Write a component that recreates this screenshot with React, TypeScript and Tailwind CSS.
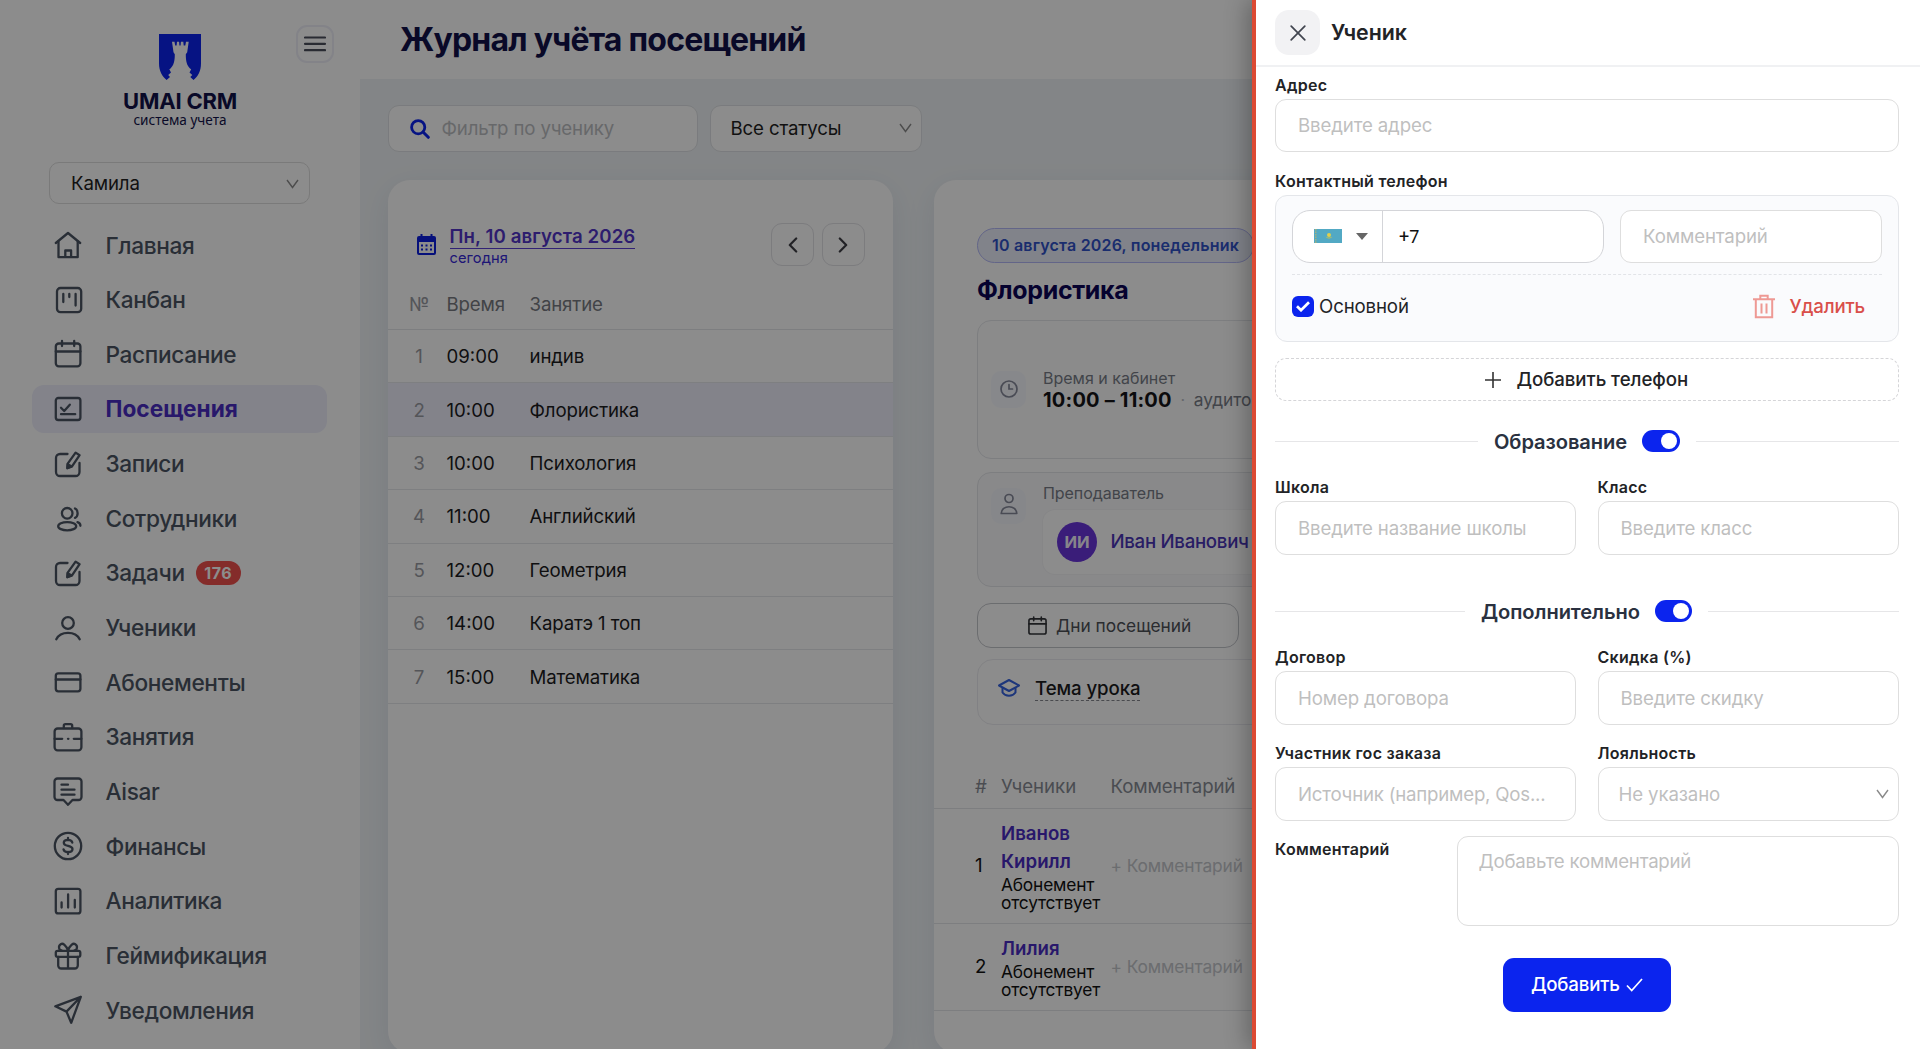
import React, { ReactNode } from 'react';

const TXT = 'text-[18.67px] tracking-[-0.14px]';

function MenuIcon({ children }: { children: ReactNode }) {
  return (
    <svg
      viewBox="0 0 28 28"
      className="h-7 w-7 shrink-0 overflow-visible text-[#4b5563]"
      fill="none"
      stroke="currentColor"
      strokeWidth="2.3"
      strokeLinecap="round"
      strokeLinejoin="round"
    >
      {children}
    </svg>
  );
}

const editIcon = (
  <>
    <path d="M13.5 4H6a4 4 0 0 0-4 4v14a4 4 0 0 0 4 4h15.500a4 4 0 0 0 4-4V13" />
    <path d="M21.600 2.600 25.600 5.200 18.200 16.200 13.300 18.200 13.700 13.700Z" />
    <path d="M13.500 18 13.700 14.200 17.600 16.600Z" fill="currentColor" />
  </>
);

const menu: { label: string; icon: ReactNode; active?: boolean; badge?: string }[] = [
  {
    label: 'Главная',
    icon: (
      <>
        <path d="M1.800 12 14 2 26.200 12" />
        <path d="M4.500 10.500V26.200h19.200V10.500M11.300 26v-6.500h5.800V26" />
      </>
    ),
  },
  {
    label: 'Канбан',
    icon: (
      <>
        <rect x="3" y="2" width="24.200" height="24.200" rx="3.500" />
        <path d="M9.300 8v8M15.300 8v3M21.600 8v11.500" />
      </>
    ),
  },
  {
    label: 'Расписание',
    icon: (
      <>
        <rect x="1.800" y="3.500" width="24.600" height="22.800" rx="3" />
        <path d="M1.800 11.500h24.600M8 1v5M20.200 1v5" />
      </>
    ),
  },
  {
    label: 'Посещения',
    active: true,
    icon: (
      <>
        <rect x="1.800" y="3" width="24.600" height="22" rx="2.500" />
        <path d="m7 12.800 3.200 3.200 5.600-6.300M7 19.200h14.200" />
      </>
    ),
  },
  { label: 'Записи', icon: editIcon },
  {
    label: 'Сотрудники',
    icon: (
      <>
        <circle cx="13.200" cy="9.300" r="5.300" />
        <ellipse cx="13.200" cy="22.200" rx="9" ry="4.100" />
        <path d="M21 4.500c3.500 1.500 3.500 8 0 9.300M23.500 18.200c1.800.6 2.900 1.800 2.900 3.600" />
      </>
    ),
  },
  { label: 'Задачи', badge: '176', icon: editIcon },
  {
    label: 'Ученики',
    icon: (
      <>
        <circle cx="14" cy="9" r="5.800" />
        <path d="M2.300 25.200C6.500 16.700 21.500 16.700 25.700 25.200" />
      </>
    ),
  },
  {
    label: 'Абонементы',
    icon: (
      <>
        <rect x="1.800" y="5.300" width="24.600" height="18" rx="2.500" />
        <path d="M1.800 11.500h24.600" />
      </>
    ),
  },
  {
    label: 'Занятия',
    icon: (
      <>
        <rect x=".6" y="5.500" width="26.800" height="21.800" rx="3" />
        <path d="M9.800 5V2.800c0-1 .6-1.600 1.600-1.600h5.200c1 0 1.600.6 1.600 1.600V5M.6 15.800h7.600M19.800 15.800h7.600" />
        <path d="M14 15.800h.4" />
      </>
    ),
  },
  {
    label: 'Aisar',
    icon: (
      <>
        <path d="M3.500.5h21a3 3 0 0 1 3 3v15.500a3 3 0 0 1-3 3h-6L14 26.800 9.500 22h-6a3 3 0 0 1-3-3V3.500a3 3 0 0 1 3-3Z" />
        <path d="M7.500 6.700h6.500M7.500 11.700h13M7.500 16.700h13" />
      </>
    ),
  },
  {
    label: 'Финансы',
    icon: (
      <>
        <circle cx="14" cy="14" r="13.200" />
        <path d="M18.300 10.500c-.4-1.900-2-2.700-4.300-2.700-2.500 0-4.200 1.100-4.200 3 0 4.400 8.700 2 8.700 6.300 0 2-1.800 3.100-4.500 3.100-2.500 0-4.100-.9-4.500-2.900M14 6v2M14 20v2" />
      </>
    ),
  },
  {
    label: 'Аналитика',
    icon: (
      <>
        <rect x="1.800" y="1.800" width="24.600" height="24.600" rx="2.500" />
        <path d="M7.600 15.500v5M14.100 7.500v13M20.800 13v7.500" />
      </>
    ),
  },
  {
    label: 'Геймификация',
    icon: (
      <>
        <rect x="1.800" y="8.800" width="24.500" height="6" rx="1.800" />
        <path d="M4.200 15v8.500a3 3 0 0 0 3 3h13.600a3 3 0 0 0 3-3V15M14 9v17" />
        <path d="M14 8.500C12 3 9 .8 6.700 2.200 4 3.900 4.800 8 7.500 8.500M14 8.500C16 3 19 .8 21.300 2.200 24 3.900 23.200 8 20.500 8.500" />
      </>
    ),
  },
  {
    label: 'Уведомления',
    icon: <path d="M26.800.8 1.300 10.300l11.200 5.300 4.700 11.200ZM12.500 15.600 26.800.8" />,
  },
];

function Down({ className = '' }: { className?: string }) {
  return (
    <svg viewBox="0 0 13 10" className={`mb-[1px] h-[10px] w-[13px] shrink-0 ${className}`} fill="none" stroke="currentColor" strokeWidth="1.400">
      <path d="M1 1l5.500 7.500L12 1" />
    </svg>
  );
}

function CalendarOutline({ className = '' }: { className?: string }) {
  return (
    <svg viewBox="0 0 20 20" className={className} fill="none" stroke="currentColor" strokeWidth="1.700" strokeLinecap="round" strokeLinejoin="round">
      <rect x="1" y="3" width="18" height="16" rx="2" />
      <path d="M1 8.300h18M6 1v4M14 1v4" />
    </svg>
  );
}

function Sidebar() {
  return (
    <aside className="flex h-full w-[360px] shrink-0 flex-col bg-white">
      <div className="relative flex h-[162px] flex-col items-center pt-[34px]">
        <svg viewBox="0 0 42 46" className="h-[46px] w-[42px]" fill="#0b24ee">
          <path d="M0 0H42V29.500C42 37 39 42.500 34.500 46L31.300 43 33.300 41 30.500 38.500 32.200 35.200 31 34.500C28 31.500 26.800 28 26.800 20.300L28.200 18.300 29.700 7.700H27L26.300 11.500H24.700L24.300 7.700H21.900L21.600 11.500H20.400L20.100 7.700H18L17.600 11.500H16.200L15.500 7.700H13L14.500 18.300 15.800 20.300C15.800 28 14.500 31.500 11.500 34.500L10.300 35.200 12 38.500 9.200 41 11 43 7.600 46C3.200 42.500 0 37 0 29.500Z" />
        </svg>
        <div className="mt-[9px] text-[22px] leading-[24px] font-bold tracking-[-0.2px] whitespace-nowrap text-[#12124a]">UMAI CRM</div>
        <div className="text-[13.600px] leading-[13px] whitespace-nowrap text-[#12124a] font-['Noto_Sans',sans-serif]">система учета</div>
        <div className="absolute top-[25px] left-[296px] flex h-[38px] w-[38px] items-center justify-center rounded-[11px] border-2 border-[#eeeff8]">
          <svg viewBox="0 0 22 16" className="h-4 w-[22px]" stroke="#4b4f5c" strokeWidth="2.200" strokeLinecap="round">
            <path d="M1 1.500h20M1 7.800h20M1 14.100h20" />
          </svg>
        </div>
      </div>
      <div className={`ml-[49px] flex h-[42px] w-[261px] shrink-0 items-center justify-between rounded-[10px] border border-[#dedede] pt-[2px] pr-[10px] pl-[21px] text-[#1f1f1f] ${TXT}`}>
        Камила
        <Down className="text-[#8c8c8c]" />
      </div>
      <nav className="mt-[17px] flex flex-col gap-[6.670px] pl-8">
        {menu.map((m) => (
          <div key={m.label} className={`flex h-12 w-[295px] shrink-0 items-center rounded-xl pl-[22px] ${m.active ? 'bg-[#eeeffc]' : ''}`}>
            <MenuIcon>{m.icon}</MenuIcon>
            <span className={`ml-[23.500px] pt-[1px] text-[22.670px] whitespace-nowrap ${m.active ? 'font-bold tracking-[0px] text-[#4a2cc4]' : 'font-medium tracking-[-0.350px] text-[#4b5563]'}`}>
              {m.label}
            </span>
            {m.badge && (
              <span className="ml-[11px] flex h-6 w-[45px] items-center justify-center rounded-full bg-[#f0504e] text-[16px] font-bold tracking-[0.500px] text-white">
                {m.badge}
              </span>
            )}
          </div>
        ))}
      </nav>
    </aside>
  );
}

const lessons = [
  ['09:00', 'индив'],
  ['10:00', 'Флористика'],
  ['10:00', 'Психология'],
  ['11:00', 'Английский'],
  ['12:00', 'Геометрия'],
  ['14:00', 'Каратэ 1 топ'],
  ['15:00', 'Математика'],
];

function ArrowButton({ d }: { d: string }) {
  return (
    <div className="flex h-[42.600px] w-[42.600px] items-center justify-center rounded-[11px] border border-[#e2e2e6]">
      <svg viewBox="0 0 10 16" className="h-4 w-[10px]" fill="none" stroke="#3f3f46" strokeWidth="2.200" strokeLinecap="round" strokeLinejoin="round">
        <path d={d} />
      </svg>
    </div>
  );
}

function DayCard() {
  return (
    <section className="h-[873px] w-[505px] shrink-0 rounded-[22px] bg-white pt-[43px] shadow-[0_8px_30px_rgba(30,41,90,0.08)]">
      <div className="flex h-[43px] items-center pr-[28px] pl-[29px]">
        <svg viewBox="0 0 19 21" className="h-[21px] w-[19px]">
          <path fill="#0b1ee0" fillRule="evenodd" d="M3.500 0h2v2h8V0h2v2H17a2 2 0 0 1 2 2v15a2 2 0 0 1-2 2H2a2 2 0 0 1-2-2V4a2 2 0 0 1 2-2h1.500ZM2 8v11h15V8Z" />
          <path stroke="#0b1ee0" strokeWidth="2" strokeDasharray="2 2.500" d="M4 11.500h12M4 15.500h12" />
        </svg>
        <div className="ml-[14px] flex flex-col items-start pt-[3px]">
          <span className="border-b-[1.500px] border-[#5b3fd6] pt-[2px] text-[18.670px] leading-[22px] font-semibold tracking-[0.1px] whitespace-nowrap text-[#5236c9]">Пн, 10 августа 2026</span>
          <span className="text-[14.670px] leading-[19px] tracking-[0.1px] text-[#3629d8]">сегодня</span>
        </div>
        <div className="ml-auto flex gap-2">
          <ArrowButton d="M8.200 1.500 1.800 8l6.400 6.500" />
          <ArrowButton d="M1.800 1.500 8.200 8l-6.400 6.500" />
        </div>
      </div>
      <div className={`mt-[12px] flex h-[52px] items-center border-b border-[#e3e5e9] pt-[2px] text-[#787b82] ${TXT}`}>
        <span className="w-[59px] pl-[21.500px] text-[#9a9ca3]">№</span>
        <span className="w-[83px]">Время</span>
        <span>Занятие</span>
      </div>
      {lessons.map(([time, name], i) => (
        <div key={i} className={`flex h-[53.400px] items-center border-b border-[#e6e8ec] pt-[2px] text-[#1c1c1e] ${TXT} ${i === 1 ? 'bg-[#eeeefc]' : ''}`}>
          <span className="w-[59px] pr-[5px] text-center text-[#9a9ca3]"><span className="pl-[9px]">{i + 1}</span></span>
          <span className="w-[83px] tracking-[0px]">{time}</span>
          <span>{name}</span>
        </div>
      ))}
    </section>
  );
}

function StudentRow({ n, names, height }: { n: number; names: string[]; height: string }) {
  return (
    <div className={`flex items-center border-b border-[#e3e5e9] ${height}`}>
      <span className={`w-[67px] pl-[41px] text-[#111] ${TXT}`}>{n}</span>
      <div className="w-[109.500px]">
        {names.map((x) => (
          <div key={x} className="text-[18.670px] leading-[28px] font-semibold text-[#4a2cc4]">{x}</div>
        ))}
        <div className="text-[17.330px] leading-[17.330px] tracking-[-0.180px] text-[#111]">
          Абонемент
          <br />
          отсутствует
        </div>
      </div>
      <span className="text-[17.330px] tracking-[-0.1px] whitespace-nowrap text-[#c4c6cb]">+ Комментарий</span>
    </div>
  );
}

function LessonCard() {
  return (
    <section className="h-[873px] w-[966px] shrink-0 rounded-[22px] bg-white pt-[47.500px] shadow-[0_8px_30px_rgba(30,41,90,0.08)]">
      <div className="pl-[43px]">
        <div className="flex h-[35px] w-[277px] items-center rounded-full border-[1.500px] border-[#b4b9f8] bg-[#eceefb] pl-[14px] text-[16px] font-semibold tracking-[0.190px] whitespace-nowrap text-[#3152c8]">
          10 августа 2026, понедельник
        </div>
        <h2 className="mt-[10px] text-[25px] leading-[34px] font-bold tracking-[-0.350px] text-[#0b0457]">Флористика</h2>
        <div className="mt-[13.500px] flex h-[139px] w-[600px] items-center rounded-[14px] border-[1.500px] border-[#e4e6ea] bg-[#fdfdfe] pl-[13px]">
          <div className="flex h-[37px] w-[35px] items-center justify-center rounded-[10px] bg-[#f6f7fd]">
            <svg viewBox="0 0 18 18" className="mb-[2px] h-[18px] w-[18px]" fill="none" stroke="#85899a" strokeWidth="1.700" strokeLinecap="round">
              <circle cx="9" cy="9" r="8" />
              <path d="M9 4.500V9h3.500" />
            </svg>
          </div>
          <div className="ml-[17px] whitespace-nowrap">
            <div className="text-[16px] leading-[20px] text-[#787d87]">Время и кабинет</div>
            <div className="flex items-center leading-[24px]">
              <span className="text-[20px] font-bold tracking-[0.200px] text-[#151518]">10:00 – 11:00</span>
              <span className="w-[22px] text-center text-[16px] text-[#b8bbc3]">·</span>
              <span className="text-[17.330px] text-[#787d87]">аудитория</span>
            </div>
          </div>
        </div>
        <div className="mt-[13px] flex h-[115px] w-[600px] rounded-[14px] border-[1.500px] border-[#e4e6ea] bg-[#fafafb] pt-[10px] pl-[13px]">
          <div className="mt-[5px] flex h-[36px] w-[35px] items-center justify-center rounded-[10px] bg-[#f5f6fc]">
            <svg viewBox="0 0 18 22" className="mb-[4px] h-[22px] w-[18px]" fill="none" stroke="#85899a" strokeWidth="1.700" strokeLinejoin="round">
              <circle cx="9" cy="5.500" r="4" />
              <path d="M1.200 20.500C1.500 11.500 16.500 11.500 16.800 20.500Z" />
            </svg>
          </div>
          <div className="ml-[17px]">
            <div className="text-[16px] leading-[20px] tracking-[-0.060px] text-[#787d87]">Преподаватель</div>
            <div className="mt-[7px] flex h-[64px] w-[400px] items-center rounded-[12px] bg-white pl-[14px] shadow-[0_0_0_1px_#f4f4f6]">
              <div className="flex h-10 w-10 items-center justify-center rounded-full bg-[#6a35dd] text-[16.500px] font-bold text-white/95">ИИ</div>
              <span className="ml-[13.500px] text-[18.670px] font-medium tracking-[-0.300px] text-[#4a35b8]">Иван Иванович</span>
            </div>
          </div>
        </div>
        <div className="mt-[16px] flex h-[45px] w-[262px] items-center rounded-[14px] border-[1.500px] border-[#c4c6cb] pl-[50px] text-[17.330px] text-[#4d5057]">
          <CalendarOutline className="mr-[9px] h-[19px] w-[19px] text-[#33353a]" />
          Дни посещений
        </div>
        <div className="mt-[11px] flex h-[66px] w-[600px] items-start rounded-[16px] border-[1.500px] border-[#ececf0] pt-[15px] pl-[20px]">
          <svg viewBox="0 0 22 18" className="mt-[4px] h-[18px] w-[22px]" fill="none" stroke="#3563e0" strokeWidth="2" strokeLinejoin="round" strokeLinecap="round">
            <path d="M1 6.500 11 1l10 5.500L11 12Z" />
            <path d="M4.500 9v4.500c3 4.300 10 4.300 13 0V9" />
          </svg>
          <span className="ml-[15px] border-b-[1.500px] border-dashed border-[#85888f] pt-[2px] text-[18.670px] leading-[23px] font-medium tracking-[-0.090px] text-[#1c1c1e]">Тема урока</span>
        </div>
      </div>
      <div className={`mt-[41.500px] flex h-[42px] items-center border-b border-[#e3e5e9] text-[#878b94] ${TXT}`}>
        <span className="w-[67px] pl-[41px]">#</span>
        <span className="w-[109.500px] tracking-[0px]">Ученики</span>
        <span>Комментарий</span>
      </div>
      <StudentRow n={1} names={['Иванов', 'Кирилл']} height="h-[115px]" />
      <StudentRow n={2} names={['Лилия']} height="h-[87px]" />
    </section>
  );
}

function Field({ label, children }: { label: string; children: ReactNode }) {
  return (
    <div className="min-w-0 flex-1">
      <Label>{label}</Label>
      {children}
    </div>
  );
}

function Label({ children }: { children: ReactNode }) {
  return <div className="flex h-[28px] items-center text-[16px] font-semibold tracking-[0.270px] whitespace-nowrap text-[#222326]">{children}</div>;
}

function Box({ children, pad = 'px-[22px]' }: { children: ReactNode; pad?: string }) {
  return (
    <div className={`flex h-[53.330px] items-center rounded-[11px] border-[1.330px] border-[#dedede] bg-white pt-[1.500px] whitespace-nowrap text-[#bfbfbf] ${TXT} ${pad}`}>
      {children}
    </div>
  );
}

function Divider({ label }: { label: string }) {
  return (
    <div className="flex h-[44px] items-center">
      <span className="h-[1.330px] flex-1 bg-[#e6e6e8]" />
      <span className="ml-4 pt-[1px] text-[20.100px] font-semibold tracking-[-0.070px] text-[#2a3140]">{label}</span>
      <span className="mr-4 ml-[15px] flex h-[22px] w-[37.500px] items-center justify-end rounded-full bg-[#0b24ee] pr-[3px]">
        <span className="h-4 w-4 rounded-full bg-white" />
      </span>
      <span className="h-[1.330px] flex-1 bg-[#e6e6e8]" />
    </div>
  );
}

function Drawer() {
  return (
    <div className="absolute inset-y-0 right-0 w-[668px] border-l-4 border-[#dc4a33] bg-white shadow-[-4px_0_22px_rgba(0,0,0,0.300)]">
      <header className="flex h-[67px] items-center border-b-2 border-[#f0f1f3] pl-[19px]">
        <div className="flex h-[45px] w-[45px] items-center justify-center rounded-[14px] bg-[#f2f2f4]">
          <svg viewBox="0 0 16 16" className="h-4 w-4" stroke="#41454f" strokeWidth="1.700" strokeLinecap="round">
            <path d="M1.200 1.200 14.800 14.800M14.800 1.200 1.200 14.800" />
          </svg>
        </div>
        <span className="ml-[11px] pt-[1px] text-[21.330px] font-semibold text-[#222326]">Ученик</span>
      </header>
      <div className="pt-[4px] pr-[21.500px] pl-[19px]">
        <Field label="Адрес">
          <Box>Введите адрес</Box>
        </Field>
        <div className="mt-[15px]">
          <Field label="Контактный телефон">
            <div className="h-[147px] rounded-[12px] border-[1.500px] border-[#e4e6ea] bg-[#fafbfd] px-[16px] pt-[13.500px]">
              <div className="flex gap-4">
                <div className="flex h-[53.330px] w-[312px] items-center rounded-[18px] border-[1.330px] border-[#d4d5d9] bg-white">
                  <div className="flex h-full w-[90px] items-center border-r border-[#d4d5d9] pl-[21px]">
                    <svg viewBox="0 0 28 14" className="h-[14px] w-[28px]">
                      <rect width="28" height="14" fill="#52a9c4" />
                      <path d="M1.800 0v14" stroke="#b9b46a" strokeWidth="1.200" strokeDasharray="1.500 1" />
                      <circle cx="15" cy="6" r="2" fill="#e2cf4a" />
                      <path d="M11.500 7.500c2 2.800 5 2.800 7 0-2 1.200-5 1.200-7 0Z" fill="#b9c05c" />
                    </svg>
                    <svg viewBox="0 0 12 7" className="ml-[14px] h-[7px] w-[12px]" fill="#666">
                      <path d="M0 0h12L6 7Z" />
                    </svg>
                  </div>
                  <span className="pl-[16px] text-[18px] text-[#111] font-['Roboto',sans-serif]">+7</span>
                </div>
                <div className="flex-1">
                  <Box>Комментарий</Box>
                </div>
              </div>
              <div className="mt-[10.500px] flex items-center border-t-[1.500px] border-dashed border-[#e2e4e8] pt-[18px]">
                <span className="flex h-[21.500px] w-[21.500px] items-center justify-center rounded-[6px] bg-[#0b24ee]">
                  <svg viewBox="0 0 14 11" className="h-[11px] w-[14px]" fill="none" stroke="#fff" strokeWidth="2.700">
                    <path d="M1 5.200 5 9.200 13 1.200" />
                  </svg>
                </span>
                <span className={`ml-[5.500px] text-[#222326] ${TXT}`}>Основной</span>
                <svg viewBox="0 0 22 25" className="ml-auto h-[25px] w-[22px]" fill="none" stroke="#ee9994" strokeWidth="2">
                  <path d="M0 5.200h22M2.800 5.500V23.300h16.400V5.500M7.300 5V1.800h7.400V5M8.500 9.500v10M13.500 9.500v10" />
                </svg>
                <span className="mr-[16.500px] ml-[14px] text-[18.670px] font-medium tracking-[-0.150px] text-[#d94f4a]">Удалить</span>
              </div>
            </div>
          </Field>
        </div>
        <div className="mt-[16px] flex h-[42.600px] items-center justify-center rounded-[11px] border-[1.330px] border-dashed border-[#d5d5d8] text-[18.670px] font-medium tracking-[-0.060px] text-[#222326]">
          <svg viewBox="0 0 16 16" className="mr-[15px] h-4 w-4" stroke="#333" strokeWidth="1.600">
            <path d="M8 0v16M0 8h16" />
          </svg>
          Добавить телефон
        </div>
        <div className="mt-[18.500px]">
          <Divider label="Образование" />
        </div>
        <div className="mt-[10px] flex gap-[21.500px]">
          <Field label="Школа"><Box>Введите название школы</Box></Field>
          <Field label="Класс"><Box>Введите класс</Box></Field>
        </div>
        <div className="mt-[34.500px]">
          <Divider label="Дополнительно" />
        </div>
        <div className="mt-[10px] flex gap-[21.500px]">
          <Field label="Договор"><Box>Номер договора</Box></Field>
          <Field label="Скидка (%)"><Box>Введите скидку</Box></Field>
        </div>
        <div className="mt-[14.670px] flex gap-[21.500px]">
          <Field label="Участник гос заказа">
            <Box><span className="tracking-[-0.220px]">Источник (например, Qos...</span></Box>
          </Field>
          <Field label="Лояльность">
            <Box pad="pl-[20px] pr-[9px] justify-between">
              Не указано
              <Down className="text-[#8a8a8a]" />
            </Box>
          </Field>
        </div>
        <div className="mt-[14px] flex justify-between">
          <Label>Комментарий</Label>
          <div className="mt-[1px] h-[90.500px] w-[442px] rounded-[11px] border-[1.330px] border-[#dedede] px-[21px] pt-[11px] text-[18.670px] leading-[28px] tracking-[-0.230px] text-[#bfbfbf]">
            Добавьте комментарий
          </div>
        </div>
        <div className="mx-auto mt-[32px] flex h-[53.500px] w-[168px] items-center justify-center rounded-[11px] bg-[#0b24ee] pt-[1px] text-[18.670px] font-medium tracking-[-0.200px] text-white">
          Добавить
          <svg viewBox="0 0 17 14" className="ml-[6px] h-[14px] w-[17px]" fill="none" stroke="#fff" strokeWidth="1.700">
            <path d="M1 7.500 5.700 12.600 16 1" />
          </svg>
        </div>
      </div>
    </div>
  );
}

export default function App() {
  return (
    <div className="relative h-[1049px] w-[1920px] overflow-hidden bg-white font-['Inter',sans-serif]">
      <div className="flex h-full w-full">
        <Sidebar />
        <main className="flex min-w-0 flex-1 flex-col overflow-hidden bg-[#eff3f6]">
          <header className="flex h-[79px] shrink-0 items-center bg-white pl-[40px]">
            <h1 className="text-[32px] font-bold tracking-[-0.760px] text-[#12124a]">Журнал учёта посещений</h1>
          </header>
          <div className="mt-[26px] flex shrink-0 gap-[11.500px] pl-[27.500px]">
            <div className={`flex h-[47px] w-[310.500px] items-center rounded-[11px] border border-[#dfe1e5] bg-white pl-[21px] text-[#bcbec2] ${TXT}`}>
              <svg viewBox="0 0 20 20" className="mr-[12px] h-5 w-5" fill="none" stroke="#0b24ee" strokeWidth="2.800" strokeLinecap="round">
                <circle cx="8.200" cy="8.200" r="6.600" />
                <path d="m13.300 13.300 5 5" strokeWidth="3" />
              </svg>
              <span className="pt-[1.500px]">Фильтр по ученику</span>
            </div>
            <div className={`flex h-[47px] w-[212px] items-center justify-between rounded-[11px] border border-[#dfe1e5] bg-white pr-[9px] pl-[20px] text-[#1f1f1f] ${TXT}`}>
              <span className="pt-[1.500px]">Все статусы</span>
              <Down className="text-[#8c8c8c]" />
            </div>
          </div>
          <div className="mt-[28px] flex shrink-0 gap-[41.500px] pl-[27.500px]">
            <DayCard />
            <LessonCard />
          </div>
        </main>
      </div>
      <div className="absolute inset-0 bg-black/45" />
      <Drawer />
    </div>
  );
}
